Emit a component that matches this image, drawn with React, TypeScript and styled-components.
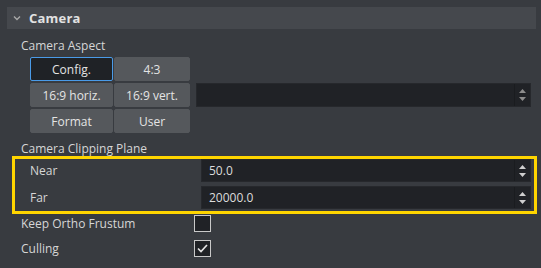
import React from "react";
import styled, { createGlobalStyle } from "styled-components";

const Global = createGlobalStyle`
  html, body { margin: 0; padding: 0; background: #383b40; }
  body { font-family: "Open Sans", "Noto Sans", sans-serif; font-size: 12px; color: #d6d6d6; }
`;

const Panel = styled.div`
  width: 541px;
  height: 268px;
  box-sizing: border-box;
  padding: 7px 5px 0 7px;
  background: #383b40;
  overflow: hidden;
`;

const Header = styled.div`
  height: 22px;
  background: #45484d;
  display: flex;
  align-items: center;
  padding-left: 6px;
  gap: 8px;
`;

const HeaderTitle = styled.span`
  font-weight: 700;
  font-size: 13px;
  color: #e2e2e2;
  letter-spacing: 0.2px;
`;

const Body = styled.div`
  padding: 0 5px 0 14px;
  display: flex;
  flex-direction: column;
`;

const SectionLabel = styled.div<{ $top: number; $bottom: number }>`
  margin-top: ${(p) => p.$top}px;
  margin-bottom: ${(p) => p.$bottom}px;
  line-height: 16px;
  height: 16px;
  white-space: nowrap;
`;

const AspectGrid = styled.div`
  margin-left: 9px;
  display: grid;
  grid-template-columns: 83px 76px 1fr;
  grid-auto-rows: 24px;
  column-gap: 1px;
  row-gap: 2px;
`;

const AspectButton = styled.button<{ $active?: boolean; $col: number }>`
  grid-column: ${(p) => p.$col};
  font-family: inherit;
  font-size: 12px;
  color: #e4e4e4;
  background: ${(p) => (p.$active ? "#1f2226" : "#55585c")};
  border: 1px solid ${(p) => (p.$active ? "#4a9be8" : "#55585c")};
  border-radius: 2px;
  padding: 0;
  margin: 0;
  height: 24px;
`;

const Field = styled.div`
  display: flex;
  align-items: stretch;
  background: #202226;
  border: 1px solid #26282c;
  box-sizing: border-box;
`;

const AspectField = styled(Field)`
  grid-column: 3;
  grid-row: 2;
  margin-left: 5px;
`;

const FieldValue = styled.div`
  flex: 1;
  display: flex;
  align-items: center;
  padding-left: 7px;
  color: #dcdcdc;
`;

const SpinBox = styled.div`
  width: 15px;
  border-left: 1px solid #1a1c1f;
  display: flex;
  align-items: center;
  justify-content: center;
`;

const Highlight = styled.div`
  margin: 0 -6px 0 -9px;
  border: 3px solid #ffd500;
  display: flex;
  flex-direction: column;
  gap: 4px;
  padding-bottom: 2px;
`;

const ClipRow = styled.div`
  height: 23px;
  display: grid;
  grid-template-columns: 186px 1fr;
  padding-right: 3px;
`;

const ClipLabel = styled.div`
  padding-left: 15px;
  display: flex;
  align-items: center;
`;

const CheckRows = styled.div`
  margin-top: 1px;
  display: flex;
  flex-direction: column;
  gap: 8px;
`;

const CheckRow = styled.div`
  display: grid;
  grid-template-columns: 173px 17px;
  height: 17px;
  align-items: center;
`;

const Box = styled.div`
  width: 17px;
  height: 17px;
  box-sizing: border-box;
  border: 1.5px solid #c9c9c9;
  background: #202226;
  display: flex;
  align-items: center;
  justify-content: center;
`;

const Spinner = ({ light }: { light?: boolean }) => (
  <svg width="9" height="16" viewBox="0 0 9 16">
    <polygon points="1,6 8,6 4.5,2" fill={light ? "#cfcfcf" : "#8c8c8c"} />
    <polygon points="1,10 8,10 4.5,14" fill={light ? "#cfcfcf" : "#8c8c8c"} />
  </svg>
);

const Chevron = () => (
  <svg width="8" height="6" viewBox="0 0 8 6">
    <polyline points="1,1.5 4,4.5 7,1.5" fill="none" stroke="#a8a8a8" strokeWidth="1.4" />
  </svg>
);

const Check = () => (
  <svg width="11" height="9" viewBox="0 0 11 9">
    <polyline points="1,4.5 4,7.5 10,1" fill="none" stroke="#e4e4e4" strokeWidth="1.7" />
  </svg>
);

export default function App() {
  return (
    <>
      <Global />
      <Panel>
        <Header>
          <Chevron />
          <HeaderTitle>Camera</HeaderTitle>
        </Header>
        <Body>
          <SectionLabel $top={9} $bottom={3}>Camera Aspect</SectionLabel>
          <AspectGrid>
            <AspectButton $col={1} $active>Config.</AspectButton>
            <AspectButton $col={2}>4:3</AspectButton>
            <AspectButton $col={1}>16:9 horiz.</AspectButton>
            <AspectButton $col={2}>16:9 vert.</AspectButton>
            <AspectField>
              <FieldValue />
              <SpinBox>
                <Spinner />
              </SpinBox>
            </AspectField>
            <AspectButton $col={1}>Format</AspectButton>
            <AspectButton $col={2}>User</AspectButton>
          </AspectGrid>
          <SectionLabel $top={8} $bottom={-1}>Camera Clipping Plane</SectionLabel>
          <Highlight>
            <ClipRow>
              <ClipLabel>Near</ClipLabel>
              <Field>
                <FieldValue>50.0</FieldValue>
                <SpinBox>
                  <Spinner light />
                </SpinBox>
              </Field>
            </ClipRow>
            <ClipRow>
              <ClipLabel>Far</ClipLabel>
              <Field>
                <FieldValue>20000.0</FieldValue>
                <SpinBox>
                  <Spinner light />
                </SpinBox>
              </Field>
            </ClipRow>
          </Highlight>
          <CheckRows>
            <CheckRow>
              <span>Keep Ortho Frustum</span>
              <Box />
            </CheckRow>
            <CheckRow>
              <span>Culling</span>
              <Box>
                <Check />
              </Box>
            </CheckRow>
          </CheckRows>
        </Body>
      </Panel>
    </>
  );
}
